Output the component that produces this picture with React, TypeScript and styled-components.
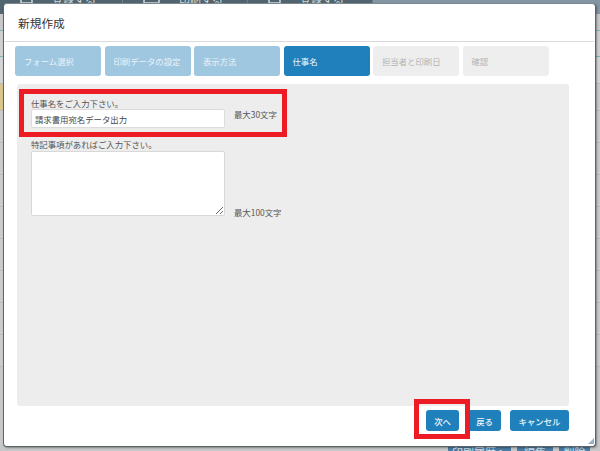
import React from "react";
import styled, { createGlobalStyle } from "styled-components";

const Global = createGlobalStyle`
  html, body { margin: 0; padding: 0; background: #c4c6c7; }
  * { box-sizing: border-box; }
  body { font-family: "Noto Sans CJK JP", "Noto Sans", sans-serif; }
`;

const Page = styled.div`
  position: relative;
  width: 600px;
  height: 451px;
  overflow: hidden;
  display: flex;
  flex-direction: column;
  background: #c6c8c9;
`;

const TopBar = styled.div`
  height: 14px;
  display: flex;
  flex: none;
  background: #8296a3;
`;

const TopMenu = styled.div`
  width: 373px;
  height: 14px;
  display: flex;
  background: #50656f;
  overflow: hidden;
`;

const TopItem = styled.div<{ $w: number }>`
  width: ${(p) => p.$w}px;
  height: 14px;
  display: flex;
  gap: 19px;
  padding-left: 20px;
  color: #d4dadd;
  font-size: 11px;
  line-height: 16px;
  white-space: nowrap;
  border-right: 1px solid #6d808a;
  transform: translateY(-9px);
`;

const TopIcon = styled.svg`
  flex: none;
`;

const Rows = styled.div`
  flex: 1;
  display: flex;
  flex-direction: column;
`;

const Row = styled.div<{ $h: number; $c?: string; $line?: string }>`
  flex: none;
  height: ${(p) => p.$h}px;
  background: ${(p) => p.$c || "transparent"};
  border-bottom: 1px solid ${(p) => p.$line || "#b9bbbc"};
`;

const BottomBar = styled.div`
  height: 12px;
  flex: none;
  display: flex;
  justify-content: flex-end;
  gap: 6px;
  padding-right: 10px;
  background: #c6c8c9;
`;

const BottomBtn = styled.div<{ $w: number }>`
  width: ${(p) => p.$w}px;
  height: 12px;
  background: #4a7ba3;
  color: #d7e2ea;
  font-size: 11px;
  line-height: 26px;
  text-align: center;
  white-space: nowrap;
  overflow: hidden;
`;

const Modal = styled.div`
  position: absolute;
  left: 3px;
  top: 3px;
  width: 593px;
  height: 444px;
  background: #fff;
  border: 1px solid #5d6468;
  border-top-color: #7d8a92;
  border-radius: 4px;
  box-shadow: 1px 1px 2px rgba(0, 0, 0, 0.35);
  display: flex;
  flex-direction: column;
  padding: 0 1px;
`;

const Header = styled.div`
  height: 38px;
  flex: none;
  padding: 7px 0 0 13px;
  border-bottom: 1px solid #d9d9d9;
  font-size: 11.7px;
  line-height: 24px;
  color: #333;
`;

const Tabs = styled.div`
  display: flex;
  gap: 3.5px;
  margin: 4px 0 0 10px;
`;

const Tab = styled.div<{ $state: "done" | "active" | "todo" }>`
  width: 86px;
  height: 30px;
  padding-left: 9px;
  border-radius: 3px;
  font-size: 8.4px;
  line-height: 30px;
  white-space: nowrap;
  background: ${(p) =>
    p.$state === "done" ? "#9fc7e0" : p.$state === "active" ? "#1f80bb" : "#eeeeee"};
  color: ${(p) =>
    p.$state === "done" ? "#e9f3f9" : p.$state === "active" ? "#f2f8fc" : "#b3b3b3"};
`;

const Panel = styled.div`
  margin: 8px 0 0 12px;
  width: 552px;
  height: 322px;
  background: #ededed;
  border-radius: 3px;
  padding: 14px 0 0 14px;
`;

const Field = styled.div`
  display: flex;
  align-items: flex-end;
  gap: 9px;
`;

const FieldGroup = styled.div`
  width: 194px;
`;

const FieldLabel = styled.div`
  font-size: 8.4px;
  line-height: 11px;
  color: #555;
  white-space: nowrap;
`;

const NameInput = styled.input`
  display: block;
  width: 194px;
  height: 19px;
  padding: 0 3px;
  border: 1px solid #dcdcdc;
  border-radius: 2px;
  background: #fff;
  font: 8.4px "Noto Sans CJK JP", sans-serif;
  color: #444;
  outline: none;
`;

const NoteArea = styled.textarea`
  display: block;
  width: 194px;
  height: 65px;
  margin-top: 1px;
  border: 1px solid #d8d8d8;
  border-radius: 2px;
  background: #fff;
  outline: none;
`;

const Limit = styled.div<{ $drop: number }>`
  font-size: 8.4px;
  line-height: 11px;
  color: #555;
  white-space: nowrap;
  margin-bottom: ${(p) => p.$drop}px;
`;

const NoteField = styled(Field)`
  margin-top: 11px;
`;

const Footer = styled.div`
  display: flex;
  justify-content: flex-end;
  gap: 9px;
  margin: 4px 25px 0 0;
`;

const Action = styled.button<{ $w: number }>`
  width: ${(p) => p.$w}px;
  height: 21px;
  padding: 0;
  border: none;
  border-radius: 3px;
  background: #1f80bb;
  color: #f0f6fa;
  font: 500 8.4px "Noto Sans CJK JP", sans-serif;
`;

const Highlight = styled.div<{ $x: number; $y: number; $w: number; $h: number }>`
  position: absolute;
  left: ${(p) => p.$x}px;
  top: ${(p) => p.$y}px;
  width: ${(p) => p.$w}px;
  height: ${(p) => p.$h}px;
  border: 5px solid #ed1c24;
`;

const Grip = styled.svg`
  position: absolute;
  right: 1px;
  bottom: 2px;
`;

const tabs: [string, "done" | "active" | "todo"][] = [
  ["フォーム選択", "done"],
  ["印刷データの設定", "done"],
  ["表示方法", "done"],
  ["仕事名", "active"],
  ["担当者と印刷日", "todo"],
  ["確認", "todo"],
];

const menu: [number, number, string][] = [
  [123, 13, "登録する"],
  [125, 17, "印刷する"],
  [125, 13, "登録する"],
];

export default function App() {
  return (
    <Page>
      <Global />
      <TopBar>
        <TopMenu>
          {menu.map(([w, iw, label], i) => (
            <TopItem key={i} $w={w}>
              <TopIcon width={iw} height="14" viewBox={`0 0 ${iw} 14`}>
                <rect x="1" y="2" width={iw - 2} height="10" fill="none" stroke="#d4dadd" strokeWidth="1.5" />
              </TopIcon>
              {label}
            </TopItem>
          ))}
        </TopMenu>
      </TopBar>
      <Rows>
        <Row $h={17} $c="#c6c8c9" $line="#7fb1b8" />
        <Row $h={26} $c="#cdcfd0" $line="#7fb1b8" />
        <Row $h={27} $c="#d2d4d5" />
        <Row $h={27} $c="linear-gradient(to right, #d8c68c 5px, #c9cbcc 5px)" />
        <Row $h={32} $c="#c9cbcc" />
        <Row $h={32} $c="#c9cbcc" />
        <Row $h={32} $c="#c9cbcc" />
        <Row $h={32} $c="#c9cbcc" />
        <Row $h={32} $c="#c9cbcc" />
        <Row $h={32} $c="#c9cbcc" />
        <Row $h={32} $c="#c9cbcc" />
        <Row $h={32} $c="#c9cbcc" />
      </Rows>
      <BottomBar>
        <BottomBtn $w={63}>印刷履歴へ</BottomBtn>
        <BottomBtn $w={36}>編集</BottomBtn>
        <BottomBtn $w={31}>削除</BottomBtn>
      </BottomBar>

      <Modal>
        <Header>新規作成</Header>
        <Tabs>
          {tabs.map(([label, state]) => (
            <Tab key={label} $state={state}>
              {label}
            </Tab>
          ))}
        </Tabs>
        <Panel>
          <Field>
            <FieldGroup>
              <FieldLabel>仕事名をご入力下さい。</FieldLabel>
              <NameInput readOnly value="請求書用宛名データ出力" />
            </FieldGroup>
            <Limit $drop={8}>最大30文字</Limit>
          </Field>
          <NoteField>
            <FieldGroup>
              <FieldLabel>特記事項があればご入力下さい。</FieldLabel>
              <NoteArea readOnly />
            </FieldGroup>
            <Limit $drop={-2}>最大100文字</Limit>
          </NoteField>
        </Panel>
        <Footer>
          <Action $w={33}>次へ</Action>
          <Action $w={33}>戻る</Action>
          <Action $w={59}>キャンセル</Action>
        </Footer>
        <Grip width="6" height="6" viewBox="0 0 6 6">
          <path d="M6 0V6H0Z" fill="#8fb4cc" />
        </Grip>
      </Modal>
      <Highlight $x={19} $y={89} $w={268} $h={48} />
      <Highlight $x={414} $y={399} $w={56} $h={40} />
    </Page>
  );
}
